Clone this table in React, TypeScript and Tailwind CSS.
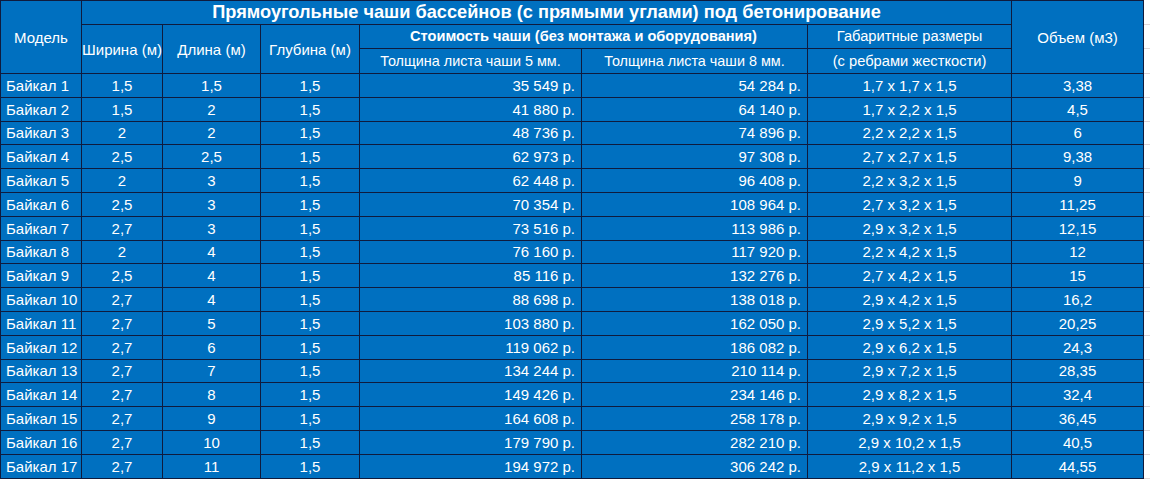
import React from 'react';

type Row = [string, string, string, string, string, string, string, string];

const rows: Row[] = [
  ['Байкал 1', '1,5', '1,5', '1,5', '35 549 р.', '54 284 р.', '1,7 x 1,7 x 1,5', '3,38'],
  ['Байкал 2', '1,5', '2', '1,5', '41 880 р.', '64 140 р.', '1,7 x 2,2 x 1,5', '4,5'],
  ['Байкал 3', '2', '2', '1,5', '48 736 р.', '74 896 р.', '2,2 x 2,2 x 1,5', '6'],
  ['Байкал 4', '2,5', '2,5', '1,5', '62 973 р.', '97 308 р.', '2,7 x 2,7 x 1,5', '9,38'],
  ['Байкал 5', '2', '3', '1,5', '62 448 р.', '96 408 р.', '2,2 x 3,2 x 1,5', '9'],
  ['Байкал 6', '2,5', '3', '1,5', '70 354 р.', '108 964 р.', '2,7 x 3,2 x 1,5', '11,25'],
  ['Байкал 7', '2,7', '3', '1,5', '73 516 р.', '113 986 р.', '2,9 x 3,2 x 1,5', '12,15'],
  ['Байкал 8', '2', '4', '1,5', '76 160 р.', '117 920 р.', '2,2 x 4,2 x 1,5', '12'],
  ['Байкал 9', '2,5', '4', '1,5', '85 116 р.', '132 276 р.', '2,7 x 4,2 x 1,5', '15'],
  ['Байкал 10', '2,7', '4', '1,5', '88 698 р.', '138 018 р.', '2,9 x 4,2 x 1,5', '16,2'],
  ['Байкал 11', '2,7', '5', '1,5', '103 880 р.', '162 050 р.', '2,9 x 5,2 x 1,5', '20,25'],
  ['Байкал 12', '2,7', '6', '1,5', '119 062 р.', '186 082 р.', '2,9 x 6,2 x 1,5', '24,3'],
  ['Байкал 13', '2,7', '7', '1,5', '134 244 р.', '210 114 р.', '2,9 x 7,2 x 1,5', '28,35'],
  ['Байкал 14', '2,7', '8', '1,5', '149 426 р.', '234 146 р.', '2,9 x 8,2 x 1,5', '32,4'],
  ['Байкал 15', '2,7', '9', '1,5', '164 608 р.', '258 178 р.', '2,9 x 9,2 x 1,5', '36,45'],
  ['Байкал 16', '2,7', '10', '1,5', '179 790 р.', '282 210 р.', '2,9 x 10,2 x 1,5', '40,5'],
  ['Байкал 17', '2,7', '11', '1,5', '194 972 р.', '306 242 р.', '2,9 x 11,2 x 1,5', '44,55'],
];

const cell = 'border border-[#0f1b3d] bg-[#0070c0] p-0 leading-none whitespace-nowrap';
const gap = 'border-b border-[#e3d9d9] bg-white p-0';

export default function App() {
  return (
    <div className="w-[1150px] h-[479px] overflow-hidden bg-white">
      <table
        className="table-fixed border-collapse text-white text-[15px]"
        style={{ fontFamily: '"Liberation Sans", Arial, sans-serif', width: 1150 }}
      >
        <colgroup>
          <col className="w-[81px]" />
          <col className="w-[81px]" />
          <col className="w-[98px]" />
          <col className="w-[99px]" />
          <col className="w-[222px]" />
          <col className="w-[226px]" />
          <col className="w-[204px]" />
          <col className="w-[132px]" />
          <col className="w-[7px]" />
        </colgroup>
        <thead>
          <tr className="h-[24px]">
            <th rowSpan={3} className={`${cell} font-normal text-center`}>Модель</th>
            <th colSpan={6} className={`${cell} font-bold text-[18.2px] text-center`}>
              Прямоугольные чаши бассейнов (с прямыми углами) под бетонирование
            </th>
            <th rowSpan={3} className={`${cell} font-normal text-center`}>Объем (м3)</th>
            <td className={gap}></td>
          </tr>
          <tr className="h-[24px]">
            <th rowSpan={2} className={`${cell} font-normal text-center`}>Ширина (м)</th>
            <th rowSpan={2} className={`${cell} font-normal text-center`}>Длина (м)</th>
            <th rowSpan={2} className={`${cell} font-normal text-center`}>Глубина (м)</th>
            <th colSpan={2} className={`${cell} font-bold text-[14.6px] text-center`}>
              Стоимость чаши (без монтажа и оборудования)
            </th>
            <th className={`${cell} font-normal text-[14.7px] text-center`}>Габаритные размеры</th>
            <td className={gap}></td>
          </tr>
          <tr className="h-[25px]">
            <th className={`${cell} font-normal text-[14.4px] text-center`}>Толщина листа чаши 5 мм.</th>
            <th className={`${cell} font-normal text-[14.4px] text-center`}>Толщина листа чаши 8 мм.</th>
            <th className={`${cell} font-normal text-[14.7px] text-center`}>(с ребрами жесткости)</th>
            <td className={gap}></td>
          </tr>
        </thead>
        <tbody>
          {rows.map((r) => (
            <tr key={r[0]} className="h-[23.8px]">
              <td className={`${cell} text-left pl-[5px]`}>{r[0]}</td>
              <td className={`${cell} text-center`}>{r[1]}</td>
              <td className={`${cell} text-center`}>{r[2]}</td>
              <td className={`${cell} text-center`}>{r[3]}</td>
              <td className={`${cell} text-right pr-[6px]`}>{r[4]}</td>
              <td className={`${cell} text-right pr-[6px]`}>{r[5]}</td>
              <td className={`${cell} text-center`}>{r[6]}</td>
              <td className={`${cell} text-center`}>{r[7]}</td>
              <td className={gap}></td>
            </tr>
          ))}
        </tbody>
      </table>
    </div>
  );
}
